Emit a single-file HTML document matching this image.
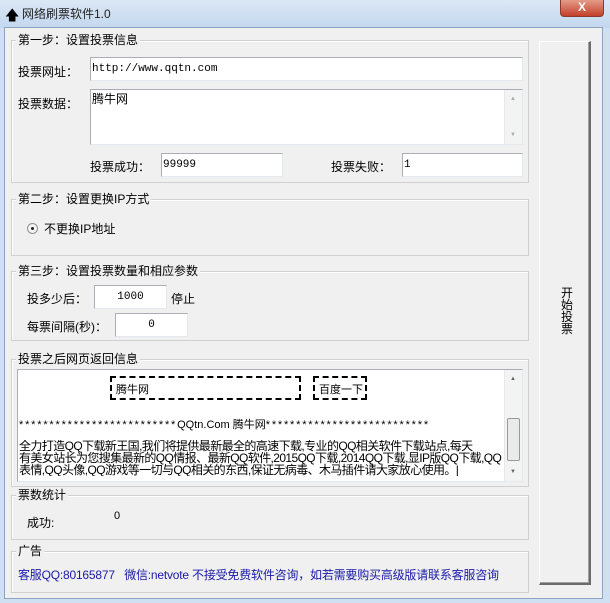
<!DOCTYPE html><html><head><meta charset="utf-8"><style>
*{margin:0;padding:0;box-sizing:border-box}
body{width:610px;height:603px;overflow:hidden;background:#cfe0f3;font:12px "Liberation Sans","Noto Sans CJK SC","WenQuanYi Zen Hei",sans-serif;color:#000;position:relative}
.a{position:absolute;white-space:nowrap}
.title{left:0;top:0;width:610px;height:28px;background:linear-gradient(#dbe8f6,#c3d7ee)}
.client{left:4px;top:27px;width:599px;height:572px;background:#f0f0f0;border:1px solid #8aa4c2}
.g{position:absolute;border:1px solid #d0d0d0;box-shadow:inset 1px 1px 0 #fff}
.lg{position:absolute;background:#f0f0f0;padding:0 2px;line-height:14px}
.in{position:absolute;background:#fff;border:1px solid #abadb3;border-right-color:#e3e9ef;border-bottom-color:#e3e9ef;font-family:"Liberation Mono","Noto Sans CJK SC",monospace;font-size:11px;padding:3px 1px}
.sb{position:absolute;right:0;top:0;bottom:0;width:18px;background:#f3f3f3;border-left:1px solid #e8e8e8}
.blue{color:#1a1aa8}
.st{letter-spacing:1.8px}
</style></head><body>
<div class="a title"></div>
<div class="a" style="left:5px;top:5px;font-size:14px">&#129093;</div>
<div class="a" style="left:22px;top:5px;font-size:12px;color:#222">网络刷票软件1.0</div>
<div class="a" style="left:560px;top:0;width:44px;height:17px;background:linear-gradient(#e49c8a,#c4402a);border:1px solid #8a3a2e;border-top:none;border-radius:0 0 4px 4px;color:#fff;text-align:center;font-weight:bold;font-size:12px;line-height:15px">X</div>
<div class="a client"></div>

<div class="g" style="left:11px;top:40px;width:518px;height:143px"></div>
<div class="lg" style="left:16px;top:33px">第一步：设置投票信息</div>
<div class="a" style="left:18px;top:63px">投票网址：</div>
<div class="in" style="left:90px;top:57px;width:433px;height:24px;padding-top:5px">http://www.qqtn.com</div>
<div class="a" style="left:18px;top:95px">投票数据：</div>
<div class="in" style="left:90px;top:89px;width:433px;height:56px;font-family:'Liberation Sans','Noto Sans CJK SC',sans-serif;font-size:12px;padding:0 1px"><span>腾牛网</span><div class="sb"><div style="position:absolute;left:5px;top:6px;color:#aaa;font-size:6px">▲</div><div style="position:absolute;left:5px;bottom:6px;color:#aaa;font-size:6px">▼</div></div></div>
<div class="a" style="left:90px;top:158px">投票成功：</div>
<div class="in" style="left:161px;top:153px;width:122px;height:24px;padding-top:5px">99999</div>
<div class="a" style="left:331px;top:158px">投票失败：</div>
<div class="in" style="left:402px;top:153px;width:121px;height:24px;padding-top:5px">1</div>

<div class="g" style="left:11px;top:199px;width:518px;height:57px"></div>
<div class="lg" style="left:16px;top:192px">第二步：设置更换IP方式</div>
<div class="a" style="left:27px;top:223px;width:11px;height:11px;border:1px solid #8f8f8f;border-radius:50%;background:#f4f4f4"><div style="position:absolute;left:3px;top:3px;width:3px;height:3px;background:#222;border-radius:50%"></div></div>
<div class="a" style="left:44px;top:220px">不更换IP地址</div>

<div class="g" style="left:11px;top:271px;width:518px;height:70px"></div>
<div class="lg" style="left:16px;top:264px">第三步：设置投票数量和相应参数</div>
<div class="a" style="left:27px;top:290px">投多少后：</div>
<div class="in" style="left:94px;top:285px;width:73px;height:24px;text-align:center;padding-top:5px">1000</div>
<div class="a" style="left:171px;top:290px">停止</div>
<div class="a" style="left:27px;top:318px">每票间隔(秒)：</div>
<div class="in" style="left:115px;top:313px;width:73px;height:24px;text-align:center;padding-top:5px">0</div>

<div class="g" style="left:11px;top:359px;width:518px;height:128px"></div>
<div class="lg" style="left:16px;top:352px">投票之后网页返回信息</div>
<div class="in" style="left:17px;top:369px;width:506px;height:113px;padding:0;font-family:'Liberation Sans','Noto Sans CJK SC',sans-serif;overflow:hidden">
<div class="a" style="left:92px;top:6px;width:191px;height:24px;border:2px dashed #000;padding:3px 4px">腾牛网</div>
<div class="a" style="left:295px;top:6px;width:54px;height:24px;border:2px dashed #000;padding:3px 4px">百度一下</div>
<div class="a" style="left:1px;top:46px;font-size:11px"><span class="st">**************************</span>QQtn.Com 腾牛网<span class="st">***************************</span></div>
<div class="a" style="left:1px;top:70px;line-height:12px;width:486px;overflow:hidden;font-size:12px;letter-spacing:-0.6px">全力打造QQ下载新王国,我们将提供最新最全的高速下载,专业的QQ相关软件下载站点,每天<br>有美女站长为您搜集最新的QQ情报、最新QQ软件,2015QQ下载,2014QQ下载,显IP版QQ下载,QQ<br>表情,QQ头像,QQ游戏等一切与QQ相关的东西,保证无病毒、木马插件请大家放心使用。|</div>
<div class="sb"><div style="position:absolute;left:2px;top:48px;width:13px;height:43px;border:1px solid #999;border-radius:2px;background:#eaeaea"></div><div style="position:absolute;left:5px;top:6px;color:#666;font-size:6px">▲</div><div style="position:absolute;left:5px;bottom:6px;color:#666;font-size:6px">▼</div></div>
</div>

<div class="g" style="left:11px;top:495px;width:518px;height:45px"></div>
<div class="lg" style="left:16px;top:488px">票数统计</div>
<div class="a" style="left:27px;top:514px">成功:</div>
<div class="a" style="left:114px;top:510px;font-size:11px">0</div>

<div class="g" style="left:11px;top:551px;width:518px;height:42px"></div>
<div class="lg" style="left:16px;top:544px">广告</div>
<div class="a blue" style="left:18px;top:566px;letter-spacing:-0.2px">客服QQ:80165877&nbsp;&nbsp;&nbsp;微信:netvote 不接受免费软件咨询，如若需要购买高级版请联系客服咨询</div>

<div class="a" style="left:539px;top:41px;width:52px;height:544px;background:#f0f0f0;border:1px solid #fff;border-right:2px solid #6b6b6b;border-bottom:2px solid #6b6b6b;box-shadow:inset -1px -1px 0 #a0a0a0"></div>
<div class="a" style="left:560px;top:287px;width:14px;line-height:12px;text-align:center;white-space:normal">开<br>始<br>投<br>票</div>
</body></html>
